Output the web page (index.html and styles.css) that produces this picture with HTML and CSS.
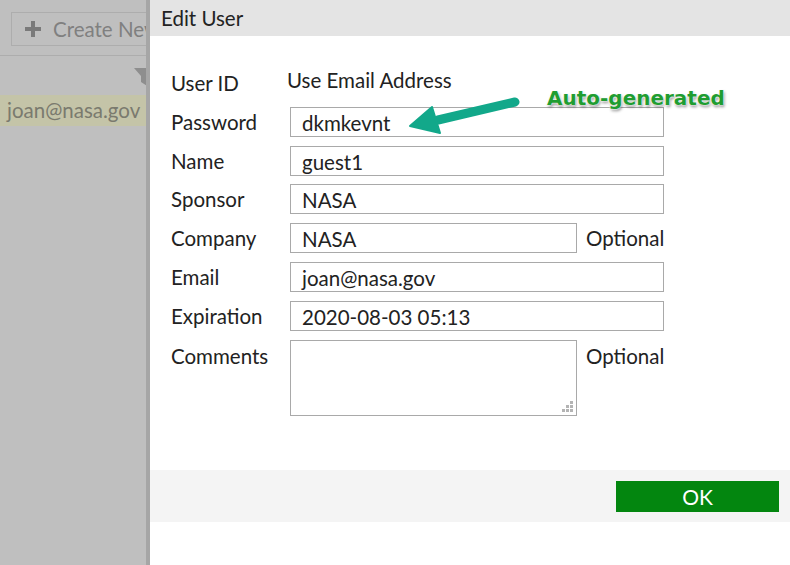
FILE: index.html
```html
<!DOCTYPE html>
<html>
<head>
<meta charset="utf-8">
<link rel="stylesheet" href="styles.css">
</head>
<body>
<div class="page">
  <div class="behind">
    <div class="toolbar">
      <div class="create-btn">
        <svg class="plus" width="16" height="16" viewBox="0 0 16 16"><path d="M6 0h4v6h6v4h-6v6h-4v-6h-6v-4h6z" fill="#7a7a7a"/></svg>
        <span>Create New</span>
      </div>
    </div>
    <div class="colhead">
      <svg class="funnel" width="20" height="18" viewBox="0 0 20 18"><path d="M0 0h20l-7 8v10l-6-4v-6z" fill="#8e8e8e"/></svg>
    </div>
    <div class="row-sel">joan@nasa.gov</div>
  </div>
  <div class="shade"></div>
  <div class="dialog">
    <div class="dlg-head">Edit User</div>
    <div class="dlg-body">
      <div class="form">
        <div class="lbl">User ID</div>
        <div class="val">Use Email Address</div>
        <div class="lbl">Password</div>
        <div class="field wide">dkmkevnt</div>
        <div class="lbl">Name</div>
        <div class="field wide">guest1</div>
        <div class="lbl">Sponsor</div>
        <div class="field wide">NASA</div>
        <div class="lbl">Company</div>
        <div class="pair"><div class="field short">NASA</div><span class="opt">Optional</span></div>
        <div class="lbl">Email</div>
        <div class="field wide">joan@nasa.gov</div>
        <div class="lbl">Expiration</div>
        <div class="field wide">2020-08-03 05:13</div>
        <div class="lbl">Comments</div>
        <div class="pair top"><div class="field short area"><span class="grip"></span></div><span class="opt">Optional</span></div>
      </div>
      <div class="note">
        <svg class="arrow" width="120" height="44" viewBox="0 0 120 44">
          <line x1="113" y1="7" x2="36" y2="25" stroke="#12a88a" stroke-width="9" stroke-linecap="round"/>
          <path d="M8 31 L30 12 L38 38 Z" fill="#12a88a" stroke="#12a88a" stroke-width="2" stroke-linejoin="round"/>
        </svg>
        <span class="auto">Auto-generated</span>
      </div>
    </div>
    <div class="dlg-foot"><div class="ok">OK</div></div>
  </div>
</div>
</body>
</html>
```
FILE: styles.css
```css
html, body {
  margin: 0;
  padding: 0;
}
body {
  width: 790px;
  height: 565px;
  overflow: hidden;
  font-family: Lato, "Open Sans", sans-serif;
  background: #fff;
}
.page {
  display: flex;
  height: 565px;
}
.behind {
  width: 146px;
  flex: none;
  background: #bfbfbf;
  overflow: hidden;
  color: #7c7c7c;
}
.toolbar {
  height: 56px;
  border-bottom: 1px solid #adadad;
  padding: 12px 0 0 11px;
  box-sizing: border-box;
}
.create-btn {
  width: 160px;
  height: 34px;
  border: 1px solid #adadad;
  box-sizing: border-box;
  display: flex;
  align-items: center;
  padding-left: 13px;
  gap: 12px;
  font-size: 20.5px;
  white-space: nowrap;
  color: #808080;
}
.colhead {
  height: 39px;
  position: relative;
}
.funnel {
  position: absolute;
  left: 134px;
  top: 12px;
}
.row-sel {
  height: 31px;
  background: #c4c4a8;
  font-size: 20.5px;
  line-height: 31px;
  padding-left: 7px;
  color: #7a7a6e;
}
.shade {
  width: 4px;
  flex: none;
  background: #a6a6a6;
}
.dialog {
  flex: 1;
  display: flex;
  flex-direction: column;
  background: #fff;
}
.dlg-head {
  height: 36px;
  background: #e4e4e4;
  font-size: 20.5px;
  line-height: 37px;
  padding-left: 11px;
  color: #222;
}
.dlg-body {
  height: 434px;
  position: relative;
}
.form {
  display: grid;
  grid-template-columns: 119px auto;
  grid-auto-rows: 30px;
  row-gap: 8.8px;
  padding: 32px 0 0 21px;
  font-size: 20.5px;
  color: #222;
  align-items: center;
}
.form .lbl {
  line-height: 32px;
}
.form .val {
  margin-left: -3px;
  margin-top: -6px;
}
.field {
  height: 30px;
  box-sizing: border-box;
  border: 1px solid #a9a9a9;
  padding-left: 11px;
  line-height: 30px;
  color: #222;
}
.wide {
  width: 374px;
}
.short {
  width: 287px;
}
.pair {
  display: flex;
  align-items: center;
  gap: 9px;
}
.pair.top {
  align-items: flex-start;
  align-self: start;
}
.pair.top .opt {
  line-height: 32px;
}
.form .lbl:nth-last-child(2) {
  align-self: start;
}
.area {
  height: 76px;
  position: relative;
}
.grip {
  position: absolute;
  right: 3px;
  bottom: 3px;
  width: 11px;
  height: 11px;
  background:
    linear-gradient(#b4b4b4, #b4b4b4) 8px 0 / 3px 3px no-repeat,
    linear-gradient(#b4b4b4, #b4b4b4) 4px 4px / 3px 3px no-repeat,
    linear-gradient(#b4b4b4, #b4b4b4) 8px 4px / 3px 3px no-repeat,
    linear-gradient(#b4b4b4, #b4b4b4) 0 8px / 3px 3px no-repeat,
    linear-gradient(#b4b4b4, #b4b4b4) 4px 8px / 3px 3px no-repeat,
    linear-gradient(#b4b4b4, #b4b4b4) 8px 8px / 3px 3px no-repeat;
}
.opt {
  color: #222;
}
.note {
  position: absolute;
  left: 252px;
  top: 47px;
  display: flex;
  align-items: flex-start;
}
.arrow {
  margin-top: 12px;
}
.auto {
  margin-left: 25px;
  margin-top: 3px;
  font-family: "DejaVu Sans", sans-serif;
  font-weight: bold;
  font-size: 20px;
  color: #1f9d31;
  text-shadow: 0 0 2px #fff, 0 0 2px #fff, 1px 2px 3px rgba(0,0,0,0.45);
}
.dlg-foot {
  height: 52px;
  background: #f4f4f4;
  display: flex;
  justify-content: flex-end;
  align-items: center;
  padding-right: 11px;
}
.ok {
  width: 163px;
  height: 31px;
  background: #03860f;
  color: #fff;
  font-size: 21px;
  line-height: 31px;
  text-align: center;
}
```
